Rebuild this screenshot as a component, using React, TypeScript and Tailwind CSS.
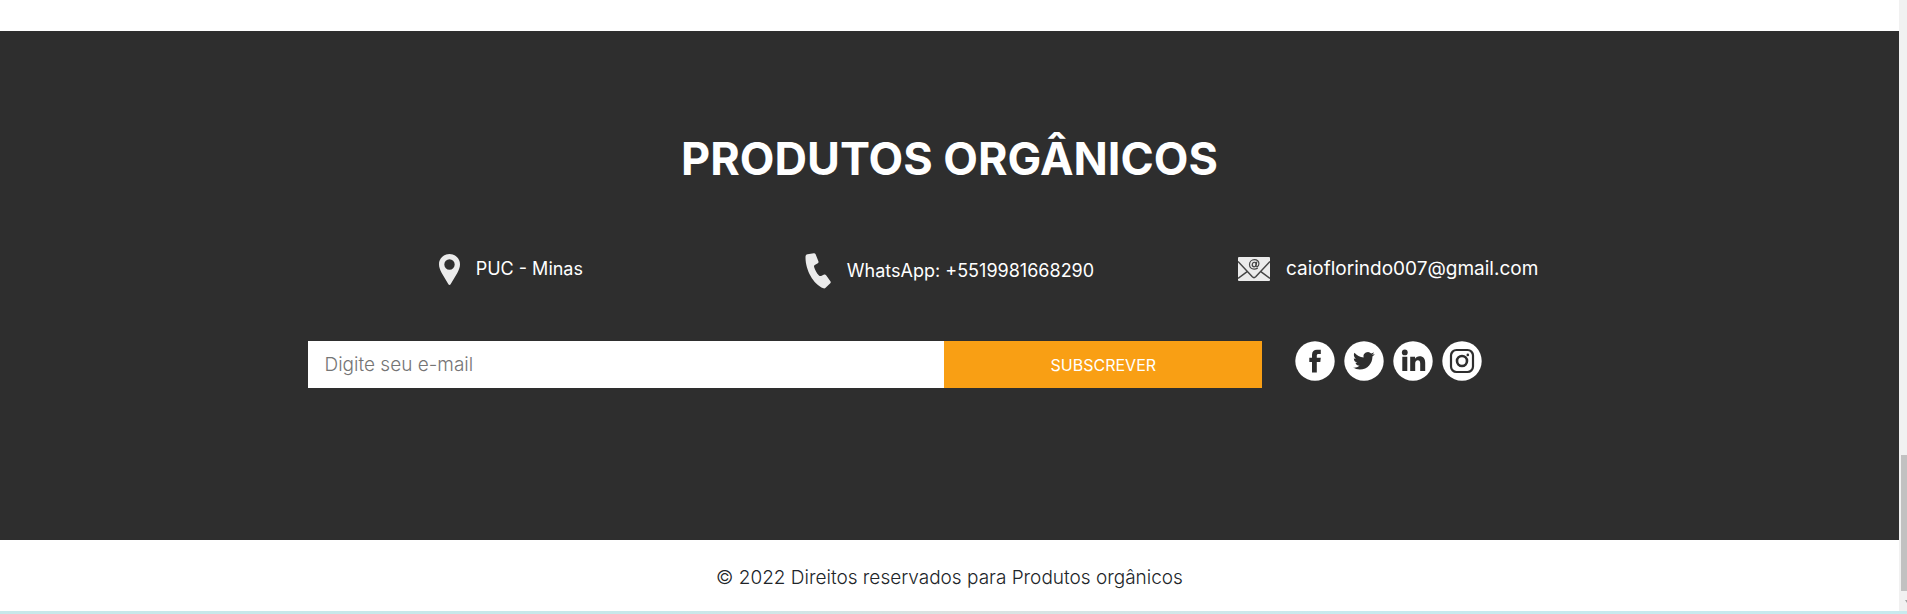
import React from "react";

const PinIcon = () => (
  <svg className="h-[31px] w-[21px] shrink-0" viewBox="0 0 21 31" aria-hidden="true">
    <path
      fill="#ebebeb"
      fillRule="evenodd"
      d="M10.5 0C4.700 0 0 4.500 0 10.200c0 3 1.100 5.600 2.700 8.700L9.400 30.200c.500.900 1.700.900 2.200 0l6.700-11.300c1.600-3.100 2.700-5.700 2.700-8.700C21 4.500 16.300 0 10.500 0Zm0 5.300a5.200 5.200 0 1 1 0 10.400 5.200 5.200 0 0 1 0-10.400Z"
    />
  </svg>
);

const PhoneIcon = () => (
  <svg className="h-9 w-[26px] shrink-0" viewBox="0 0 26 36" aria-hidden="true">
    <path
      fill="#ebebeb"
      d="M2.500 1.200 8.800.200c.8-.1 1.400.2 1.700.9l2.900 7.200c.3.800.1 1.500-.6 1.900l-3 1.800c-.7.500-.9 1.100-.7 1.900.9 3.100 2.600 6.200 4.900 8.600.600.600 1.400.7 2.100.4l3-1.300c.8-.3 1.500-.1 2 .6l4.300 6c.5.700.5 1.500-.1 2.100L20.600 34.800c-.6.600-1.400.8-2.200.5C8.200 31.200.4 16.700.5 4.200c0-1.700.5-2.700 2-3Z"
    />
  </svg>
);

const MailIcon = () => (
  <svg className="h-6 w-8 shrink-0" viewBox="0 0 32 24" aria-hidden="true">
    <rect width="32" height="24" rx="1" fill="#ebebeb" />
    <path
      d="M0 4.500 14.300 19.800q1.700 1.600 3.400 0L32 4.500M0 21.500l9.500-7.200M32 21.500l-9.500-7.200"
      fill="none"
      stroke="#454545"
      strokeWidth="1.500"
    />
    <g fill="none" stroke="#454545" strokeWidth="1.200" strokeLinecap="round">
      <ellipse cx="16.200" cy="7.500" rx="1.900" ry="2.300" transform="rotate(18 16.200 7.500)" />
      <path d="m18.700 5.200-.8 3.600c-.2 1.700 2.900 1.200 3-2 .1-2.500-1.900-4.100-4.400-4.100-3 0-5 2.200-5 4.900 0 2.800 1.900 4.500 4.600 4.500 1.300 0 2.400-.3 3.300-.9" />
    </g>
  </svg>
);

type Social = { name: string; drawing: React.ReactNode };

const socials: Social[] = [
  {
    name: "Facebook",
    drawing: (
      <path
        fill="#2e2e2e"
        d="M17 31.500V21h-2.700v-4.300H17v-2.900c0-3.300 2-5 5-5h3.800v4.100h-2.300c-1.200 0-1.700.5-1.700 1.700v2.100h4l-.5 4.300h-3.500v10.500Z"
      />
    ),
  },
  {
    name: "Twitter",
    drawing: (
      <path
        fill="#2e2e2e"
        transform="translate(9 9) scale(.9)"
        d="M23.950 4.570a10 10 0 0 1-2.820.77 4.960 4.960 0 0 0 2.160-2.720c-.95.550-2 .950-3.120 1.180a4.920 4.920 0 0 0-8.380 4.480C7.690 8.090 4.070 6.130 1.640 3.160a4.820 4.820 0 0 0-.67 2.480c0 1.710.87 3.210 2.190 4.100a4.900 4.900 0 0 1-2.230-.62v.06a4.920 4.920 0 0 0 3.950 4.830 5 5 0 0 1-2.210.08 4.940 4.940 0 0 0 4.600 3.420A9.870 9.870 0 0 1 0 19.540a13.990 13.990 0 0 0 7.560 2.210c9.050 0 14-7.500 14-13.980 0-.21 0-.42-.02-.63a9.940 9.940 0 0 0 2.460-2.550Z"
      />
    ),
  },
  {
    name: "LinkedIn",
    drawing: (
      <g fill="#2e2e2e">
        <circle cx="11.800" cy="11.400" r="2.900" />
        <path d="M9.300 15.700h5V30h-5ZM17.200 15.700H22v2c.9-1.500 2.500-2.400 4.500-2.400 4 0 5.700 2.500 5.700 6.400V30h-5v-7.400c0-2.100-.7-3.300-2.400-3.300s-2.600 1.300-2.600 3.300V30h-5Z" />
      </g>
    ),
  },
  {
    name: "Instagram",
    drawing: (
      <g fill="none" stroke="#2e2e2e">
        <rect x="9" y="9" width="22" height="22" rx="5.500" strokeWidth="2.200" />
        <circle cx="20" cy="20" r="5" strokeWidth="2.600" />
        <circle cx="25.800" cy="13.900" r="1.300" fill="#2e2e2e" stroke="none" />
      </g>
    ),
  },
];

export default function App() {
  return (
    <div className="bg-white font-['Inter','Noto_Sans',sans-serif] text-[#212529]">
      <div className="flex">
        <footer className="min-w-0 grow">
          <section className="mt-[31px] bg-[#2e2e2e] px-4 pt-[98px] pb-[152px] text-white">
            <h2 className="text-center text-[45px] leading-[60px] font-bold">PRODUTOS ORGÂNICOS</h2>

            <div className="mx-auto mt-16 grid max-w-[1316px] grid-cols-3 items-start text-lg leading-8">
              <p className="flex items-center justify-center gap-4">
                <PinIcon />
                PUC - Minas
              </p>
              <p className="flex items-center justify-center gap-4">
                <PhoneIcon />
                WhatsApp: +5519981668290
              </p>
              <p className="flex items-center justify-center gap-4 text-[19px] leading-8">
                <MailIcon />
                caioflorindo007@gmail.com
              </p>
            </div>

            <div className="mx-auto mt-[52px] grid max-w-[1316px] grid-cols-12">
              <form className="col-span-9 flex px-4" onSubmit={(e) => e.preventDefault()}>
                <input
                  type="email"
                  aria-label="Digite seu e-mail"
                  placeholder="Digite seu e-mail"
                  className="h-[47px] w-2/3 bg-white px-[17px] text-[19px] font-light text-[#212529] outline-none placeholder:text-[#757575]"
                />
                <button type="submit" className="h-[47px] w-1/3 bg-[#f99f14] text-base text-white">
                  SUBSCREVER
                </button>
              </form>
              <div className="col-span-3 flex gap-[9px] px-4">
                {socials.map((s) => (
                  <a key={s.name} href="#" aria-label={s.name} className="size-10">
                    <svg className="size-10" viewBox="0 0 40 40" aria-hidden="true">
                      <circle cx="20" cy="20" r="19.700" fill="#fff" />
                      {s.drawing}
                    </svg>
                  </a>
                ))}
              </div>
            </div>
          </section>

          <p className="pt-[22px] pb-[17px] text-center text-[19px] leading-8 font-light">
            © 2022 Direitos reservados para Produtos orgânicos
          </p>
        </footer>

        <div className="flex w-2 shrink-0 flex-col bg-[#f1f1f1]" aria-hidden="true">
          <div className="grow" />
          <div className="ml-0.5 h-[136px] bg-[#c1c1c1]" />
          <div className="flex h-5 items-center justify-end pt-px">
            <svg className="h-1 w-0.5" viewBox="0 0 2 4">
              <path d="M0 0h2v3Z" fill="#a3a3a3" />
            </svg>
          </div>
        </div>
      </div>
      <div className="h-[3px] bg-linear-to-r from-[#c8e8ea] from-35% via-[#dde2e1] to-[#c8eaee] to-70%" />
    </div>
  );
}
